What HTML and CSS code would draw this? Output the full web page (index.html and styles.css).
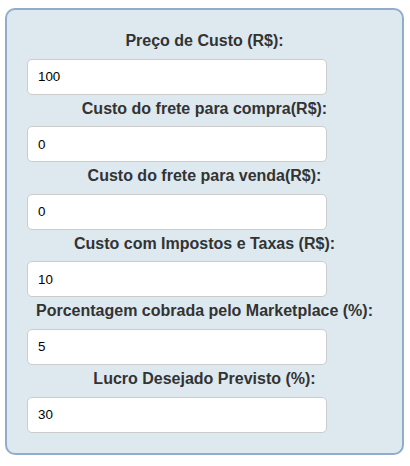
FILE: index.html
```html
<!DOCTYPE html>
<html lang="pt-BR">
<head>
    <meta charset="UTF-8">
    <meta name="viewport" content="width=device-width, initial-scale=1.0">
    <title>Calculadora de Preço</title>
    <link rel="stylesheet" href="styles.css">
</head>
<body>
    <div class="calcbox">
        <label for="custo">Preço de Custo (R$):</label>
        <input type="text" id="custo" value="100">

        <label for="freteCompra">Custo do frete para compra(R$):</label>
        <input type="text" id="freteCompra" value="0">

        <label for="freteVenda">Custo do frete para venda(R$):</label>
        <input type="text" id="freteVenda" value="0">

        <label for="impostos">Custo com Impostos e Taxas (R$):</label>
        <input type="text" id="impostos" value="10">

        <label for="marketplace">Porcentagem cobrada pelo Marketplace (%):</label>
        <input type="text" id="marketplace" value="5">

        <label for="lucro">Lucro Desejado Previsto (%):</label>
        <input type="text" id="lucro" value="30">
    </div>
</body>
</html>
```

FILE: styles.css
```css
*{
    box-sizing: border-box;
}

body{
    margin: 8px 6px 0 5px;
    font-family: Arial, "Liberation Sans", Helvetica, sans-serif;
    background-color: #fff;
}

.calcbox {
    display: flex;
    flex-direction: column;
    align-items: flex-start;
    padding: 17px 20px 20px 20px;
    background-color: #dde9ef;
    border: 2px solid #91adcc;
    border-radius: 10px;
}

.calcbox label {
    align-self: stretch;
    text-align: center;
    font-size: 16px;
    font-weight: bold;
    color: #333;
    margin: 5px 0 8.6px 0;
}

.calcbox input {
    width: 300px;
    height: 36px;
    padding: 0 10px;
    font-family: Arial, "Liberation Sans", sans-serif;
    font-size: 13.333px;
    color: #000;
    background-color: #fff;
    border: 1px solid #ccc;
    border-radius: 5px;
    outline: none;
}
```
